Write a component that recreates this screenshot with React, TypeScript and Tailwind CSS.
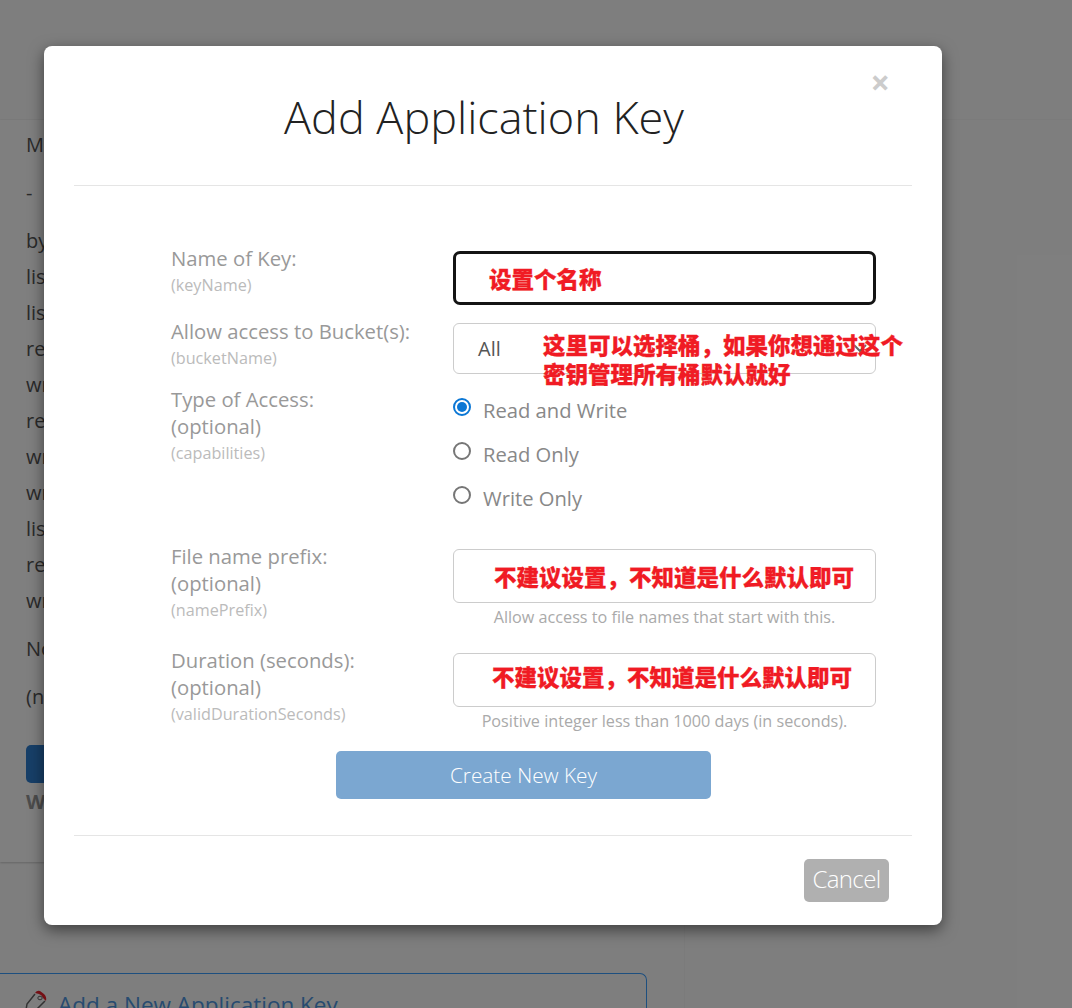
const sans = "font-['Open_Sans','Noto_Sans',sans-serif]";

function Annotation({ children, className }: { children: React.ReactNode; className: string }) {
  return (
    <div className={`absolute font-['Noto_Sans_CJK_SC',sans-serif] font-black [-webkit-text-stroke:0.3px_#f01b24] text-[22.5px] leading-[28px] text-[#f01b24] whitespace-nowrap ${className}`}>
      {children}
    </div>
  );
}

function Label({ title, optional, api, className }: { title: string; optional?: boolean; api: string; className?: string }) {
  return (
    <div className={`w-[282px] shrink-0 ${className ?? ''}`}>
      <div className="text-[20.3px] leading-[27px] text-[#999]">{title}</div>
      {optional && <div className="text-[20.3px] leading-[27px] text-[#999]">(optional)</div>}
      <div className="text-[16.2px] leading-[26px] text-[#bbb]">{api}</div>
    </div>
  );
}

function Radio({ label, checked }: { label: string; checked?: boolean }) {
  return (
    <div className="flex h-[44px] items-start">
      <span className={`flex h-[18px] w-[18px] items-center justify-center rounded-full border-2 ${checked ? 'border-[#0b77d5]' : 'border-[#767676]'}`}>
        {checked && <span className="h-[10px] w-[10px] rounded-full bg-[#0b77d5]" />}
      </span>
      <span className="ml-[12px] -mt-[3px] text-[20.2px] leading-[30px] text-[#888]">{label}</span>
    </div>
  );
}

export default function App() {
  const rows = ['bypassGovernance', 'listKeys', 'listBuckets', 'readBuckets', 'writeBuckets', 'readFiles', 'writeFiles', 'writeKeys', 'listFiles', 'readBucketEncryption', 'writeBucketEncryption'];

  return (
    <div className={`relative h-[1008px] w-[1072px] overflow-hidden bg-[#fdfdfd] ${sans}`}>
      {/* Page behind the dialog */}
      <div className="h-[120px] border-b border-[#f6f6f6]" />
      <div className="h-[742px] w-[685px] bg-white pl-[26px] pt-[7px] shadow-[0_1px_2px_rgba(0,0,0,0.2)] text-[20px] leading-[36px] text-[#555]">
        <div className="mb-[12px]">Master Application Key</div>
        <div className="mb-[12px]">-</div>
        {rows.map((r) => (
          <div key={r}>{r}</div>
        ))}
        <div className="mt-[12px]">None</div>
        <div className="mt-[12px]">(none)</div>
        <div className="mt-[30px] h-[38px] w-[200px] rounded-[5px] bg-[#2f7fd0]" />
        <div className="mt-[1px] font-bold text-[#999]">Warning</div>
      </div>
      <div className="h-[146px] w-[685px] border-r border-[#f6f6f6] pt-[111px]">
        <div className="flex h-[60px] w-[647px] items-start rounded-tr-[7px] border-r border-t border-[#3a9eff] pl-[24px] pt-[14px]">
          <svg width="24" height="24" viewBox="0 0 24 24" className="shrink-0">
            <path d="M2 22 L3 16 L11 6" fill="none" stroke="#666" strokeWidth="1.5" />
            <path d="M21 13 L12 22" fill="none" stroke="#666" strokeWidth="1.5" />
            <path d="M11 5 Q13 2 16 3 L20 6 Q23 9 22 13 L19 10 Q18 7 15 6 Z" fill="#e8202a" />
            <ellipse cx="16" cy="10" rx="2.2" ry="1.8" fill="#fff" stroke="#666" strokeWidth="1" />
          </svg>
          <span className="ml-[10px] mt-[2px] text-[22.5px] leading-[30px] text-[#4f96e0]">Add a New Application Key</span>
        </div>
      </div>

      {/* Overlay */}
      <div className="absolute inset-0 bg-black/50" />

      {/* Dialog */}
      <div className="absolute left-[44px] top-[46px] h-[879px] w-[898px] rounded-[8px] bg-white px-[30px] shadow-[0_5px_15px_rgba(0,0,0,0.5)]">
        <div className="relative flex h-[140px] items-start justify-center border-b border-[#e5e5e5] pr-[18px] pt-[36px]">
          <h1 className="text-[45px] font-light leading-[70px] text-[#222]">Add Application Key</h1>
          <span className="absolute right-[22px] top-[17px] text-[34px] font-bold leading-[38px] text-[#ccc]">×</span>
        </div>

        <div className="pl-[97px] pt-[65px]">
          <div className="flex h-[72px]">
            <Label title="Name of Key:" api="(keyName)" className="-mt-[6px]" />
            <div className="relative h-[54px] w-[423px] rounded-[7px] border-[3px] border-[#141414] bg-white">
              <Annotation className="left-[33px] top-[10px]">设置个名称</Annotation>
            </div>
          </div>

          <div className="flex h-[65px]">
            <Label title="Allow access to Bucket(s):" api="(bucketName)" className="-mt-[5px]" />
            <div className="relative h-[51px] w-[423px] rounded-[6px] border border-[#ccc] bg-white pl-[24px] text-[20px] leading-[49px] text-[#555]">
              All
              <svg width="14" height="10" viewBox="0 0 14 10" className="absolute right-[8px] top-[19px]">
                <path d="M1 2 L7 8 L13 2" fill="none" stroke="#666" strokeWidth="2" />
              </svg>
              <Annotation className="left-[89px] top-[6px]">这里可以选择桶，如果你想通过这个</Annotation>
              <Annotation className="left-[89px] top-[35px]">密钥管理所有桶默认就好</Annotation>
            </div>
          </div>

          <div className="flex h-[161px]">
            <Label title="Type of Access:" optional api="(capabilities)" className="-mt-[2px]" />
            <div className="pt-[10px]">
              <Radio label="Read and Write" checked />
              <Radio label="Read Only" />
              <Radio label="Write Only" />
            </div>
          </div>

          <div className="flex h-[104px]">
            <Label title="File name prefix:" optional api="(namePrefix)" className="-mt-[6px]" />
            <div className="w-[423px]">
              <div className="relative h-[54px] rounded-[6px] border border-[#ccc] bg-white">
                <Annotation className="left-[40px] top-[12px]">不建议设置，不知道是什么默认即可</Annotation>
              </div>
              <div className="mt-[2px] text-center text-[16.2px] leading-[24px] text-[#aaa]">Allow access to file names that start with this.</div>
            </div>
          </div>

          <div className="flex h-[98px]">
            <Label title="Duration (seconds):" optional api="(validDurationSeconds)" className="-mt-[6px]" />
            <div className="w-[423px]">
              <div className="relative h-[54px] rounded-[6px] border border-[#ccc] bg-white">
                <Annotation className="left-[38px] top-[8px]">不建议设置，不知道是什么默认即可</Annotation>
              </div>
              <div className="mt-[2px] text-center text-[16.2px] leading-[24px] text-[#aaa]">Positive integer less than 1000 days (in seconds).</div>
            </div>
          </div>

          <div className="ml-[165px] flex h-[48px] w-[375px] items-center justify-center rounded-[5px] bg-[#7ba7d1] pt-[1px] text-[20.8px] font-light text-white">Create New Key</div>
        </div>

        <div className="mt-[36px] flex h-[90px] justify-end border-t border-[#e5e5e5] pr-[23px] pt-[23px]">
          <div className="flex h-[43px] w-[85px] items-center justify-center rounded-[5px] bg-[#b0b0b0] pb-[3px] text-[24px] font-light tracking-[-0.6px] text-white">Cancel</div>
        </div>
      </div>
    </div>
  );
}
